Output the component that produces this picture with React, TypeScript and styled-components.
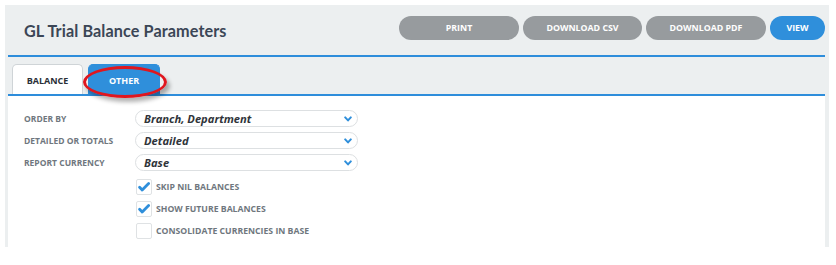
import React, { useState } from 'react';
import styled, { createGlobalStyle } from 'styled-components';

const GlobalStyle = createGlobalStyle`
  body {
    margin: 0;
    background: #ffffff;
    font-family: 'Open Sans', 'Liberation Sans', sans-serif;
  }
`;

const Page = styled.div`
  padding: 5px 7px 18px 5px;
`;

const Panel = styled.div`
  background: #eceff0;
  padding: 0 4px 0 3px;
`;

const Header = styled.div`
  display: flex;
  align-items: center;
  justify-content: space-between;
  height: 50px;
  padding: 0 0 0 16px;
  border-bottom: 2px solid #2e8ddb;
`;

const Title = styled.h1`
  margin: 0;
  font-family: Lato, 'Open Sans', sans-serif;
  font-size: 16.2px;
  font-weight: 700;
  color: #3b4656;
  letter-spacing: 0.1px;
`;

const Actions = styled.div`
  display: flex;
  gap: 4px;
  margin-top: -4px;
`;

const ActionButton = styled.button<{ $primary?: boolean; $w: number }>`
  width: ${(p) => p.$w}px;
  height: 24px;
  border: none;
  border-radius: 12px;
  background: ${(p) => (p.$primary ? '#2f8fdb' : '#979b9e')};
  color: #fff;
  font-family: 'Open Sans', 'Liberation Sans', sans-serif;
  font-size: 8.8px;
  font-weight: 700;
  text-transform: uppercase;
  cursor: pointer;
`;

const TabBar = styled.div`
  display: flex;
  align-items: flex-end;
  gap: 5px;
  height: 37px;
  padding-left: 4px;
  border-bottom: 2px solid #2e8ddb;
`;

const Tab = styled.button<{ $active?: boolean }>`
  position: relative;
  width: ${(p) => (p.$active ? 71 : 72)}px;
  height: 30px;
  border: 1px solid ${(p) => (p.$active ? '#cfd4d7' : '#2f8fdb')};
  border-bottom: none;
  border-radius: 5px 5px 0 0;
  background: ${(p) => (p.$active ? '#ffffff' : '#2f8fdb')};
  color: ${(p) => (p.$active ? '#2a2f36' : '#ffffff')};
  font-family: 'Open Sans', 'Liberation Sans', sans-serif;
  font-size: 9px;
  font-weight: 700;
  padding: 2px 0 0;
  cursor: pointer;
`;

const Highlight = styled.span`
  position: absolute;
  left: -6px;
  top: 1px;
  width: 78px;
  height: 26px;
  border: 3px solid #e0161e;
  border-radius: 50%;
  box-shadow: 3px 4px 4px rgba(0, 0, 0, 0.3);
  pointer-events: none;
`;

const Content = styled.div`
  background: #ffffff;
  height: 151px;
  padding: 14px 0 0 16px;
  box-sizing: border-box;
`;

const FieldRow = styled.div`
  display: grid;
  grid-template-columns: 111px 223px;
  align-items: center;
  margin-bottom: 5px;
`;

const Label = styled.label`
  font-size: 8.5px;
  font-weight: 700;
  color: #6f777e;
  text-transform: uppercase;
`;

const SelectBox = styled.div`
  display: flex;
  align-items: center;
  justify-content: space-between;
  height: 17px;
  border: 1px solid #dde0e2;
  border-radius: 9px;
  padding: 0 5px 0 8px;
  box-sizing: border-box;
`;

const SelectValue = styled.span`
  font-size: 11.2px;
  font-weight: 700;
  font-style: italic;
  color: #2f343a;
`;

const CheckRow = styled.label`
  display: flex;
  align-items: center;
  gap: 4px;
  margin-left: 112px;
  height: 22px;
`;

const Box = styled.span`
  display: flex;
  align-items: center;
  justify-content: center;
  width: 14px;
  height: 14px;
  border: 1px solid #dfe2e4;
  border-radius: 2px;
  background: #fff;
`;

const CheckText = styled.span`
  font-size: 8.7px;
  font-weight: 700;
  color: #6f777e;
  text-transform: uppercase;
`;

const Chevron = () => (
  <svg width="8" height="6" viewBox="0 0 8 6">
    <path d="M1.2 1.4 L4 4.4 L6.8 1.4" fill="none" stroke="#2f8fdb" strokeWidth="2" strokeLinecap="round" strokeLinejoin="round" />
  </svg>
);

const Tick = () => (
  <svg width="12" height="10" viewBox="0 0 12 10">
    <path d="M1.6 5.2 L4.2 8 L10.6 1.6" fill="none" stroke="#2f8fdb" strokeWidth="2.8" strokeLinecap="round" strokeLinejoin="round" />
  </svg>
);

const fields = [
  { label: 'Order By', value: 'Branch, Department' },
  { label: 'Detailed or Totals', value: 'Detailed' },
  { label: 'Report Currency', value: 'Base' },
];

const checks = [
  { label: 'Skip nil balances', checked: true },
  { label: 'Show future balances', checked: true },
  { label: 'Consolidate currencies in base', checked: false },
];

export default function App() {
  const [tab, setTab] = useState('other');
  return (
    <Page>
      <GlobalStyle />
      <Panel>
        <Header>
          <Title>GL Trial Balance Parameters</Title>
          <Actions>
            <ActionButton $w={120}>Print</ActionButton>
            <ActionButton $w={119}>Download CSV</ActionButton>
            <ActionButton $w={120}>Download PDF</ActionButton>
            <ActionButton $w={55} $primary>View</ActionButton>
          </Actions>
        </Header>
        <TabBar>
          <Tab $active onClick={() => setTab('balance')}>BALANCE</Tab>
          <Tab onClick={() => setTab('other')}>
            OTHER
            {tab === 'other' && <Highlight />}
          </Tab>
        </TabBar>
        <Content>
          {fields.map((f) => (
            <FieldRow key={f.label}>
              <Label>{f.label}</Label>
              <SelectBox>
                <SelectValue>{f.value}</SelectValue>
                <Chevron />
              </SelectBox>
            </FieldRow>
          ))}
          {checks.map((c) => (
            <CheckRow key={c.label}>
              <Box>{c.checked && <Tick />}</Box>
              <CheckText>{c.label}</CheckText>
            </CheckRow>
          ))}
        </Content>
      </Panel>
    </Page>
  );
}
